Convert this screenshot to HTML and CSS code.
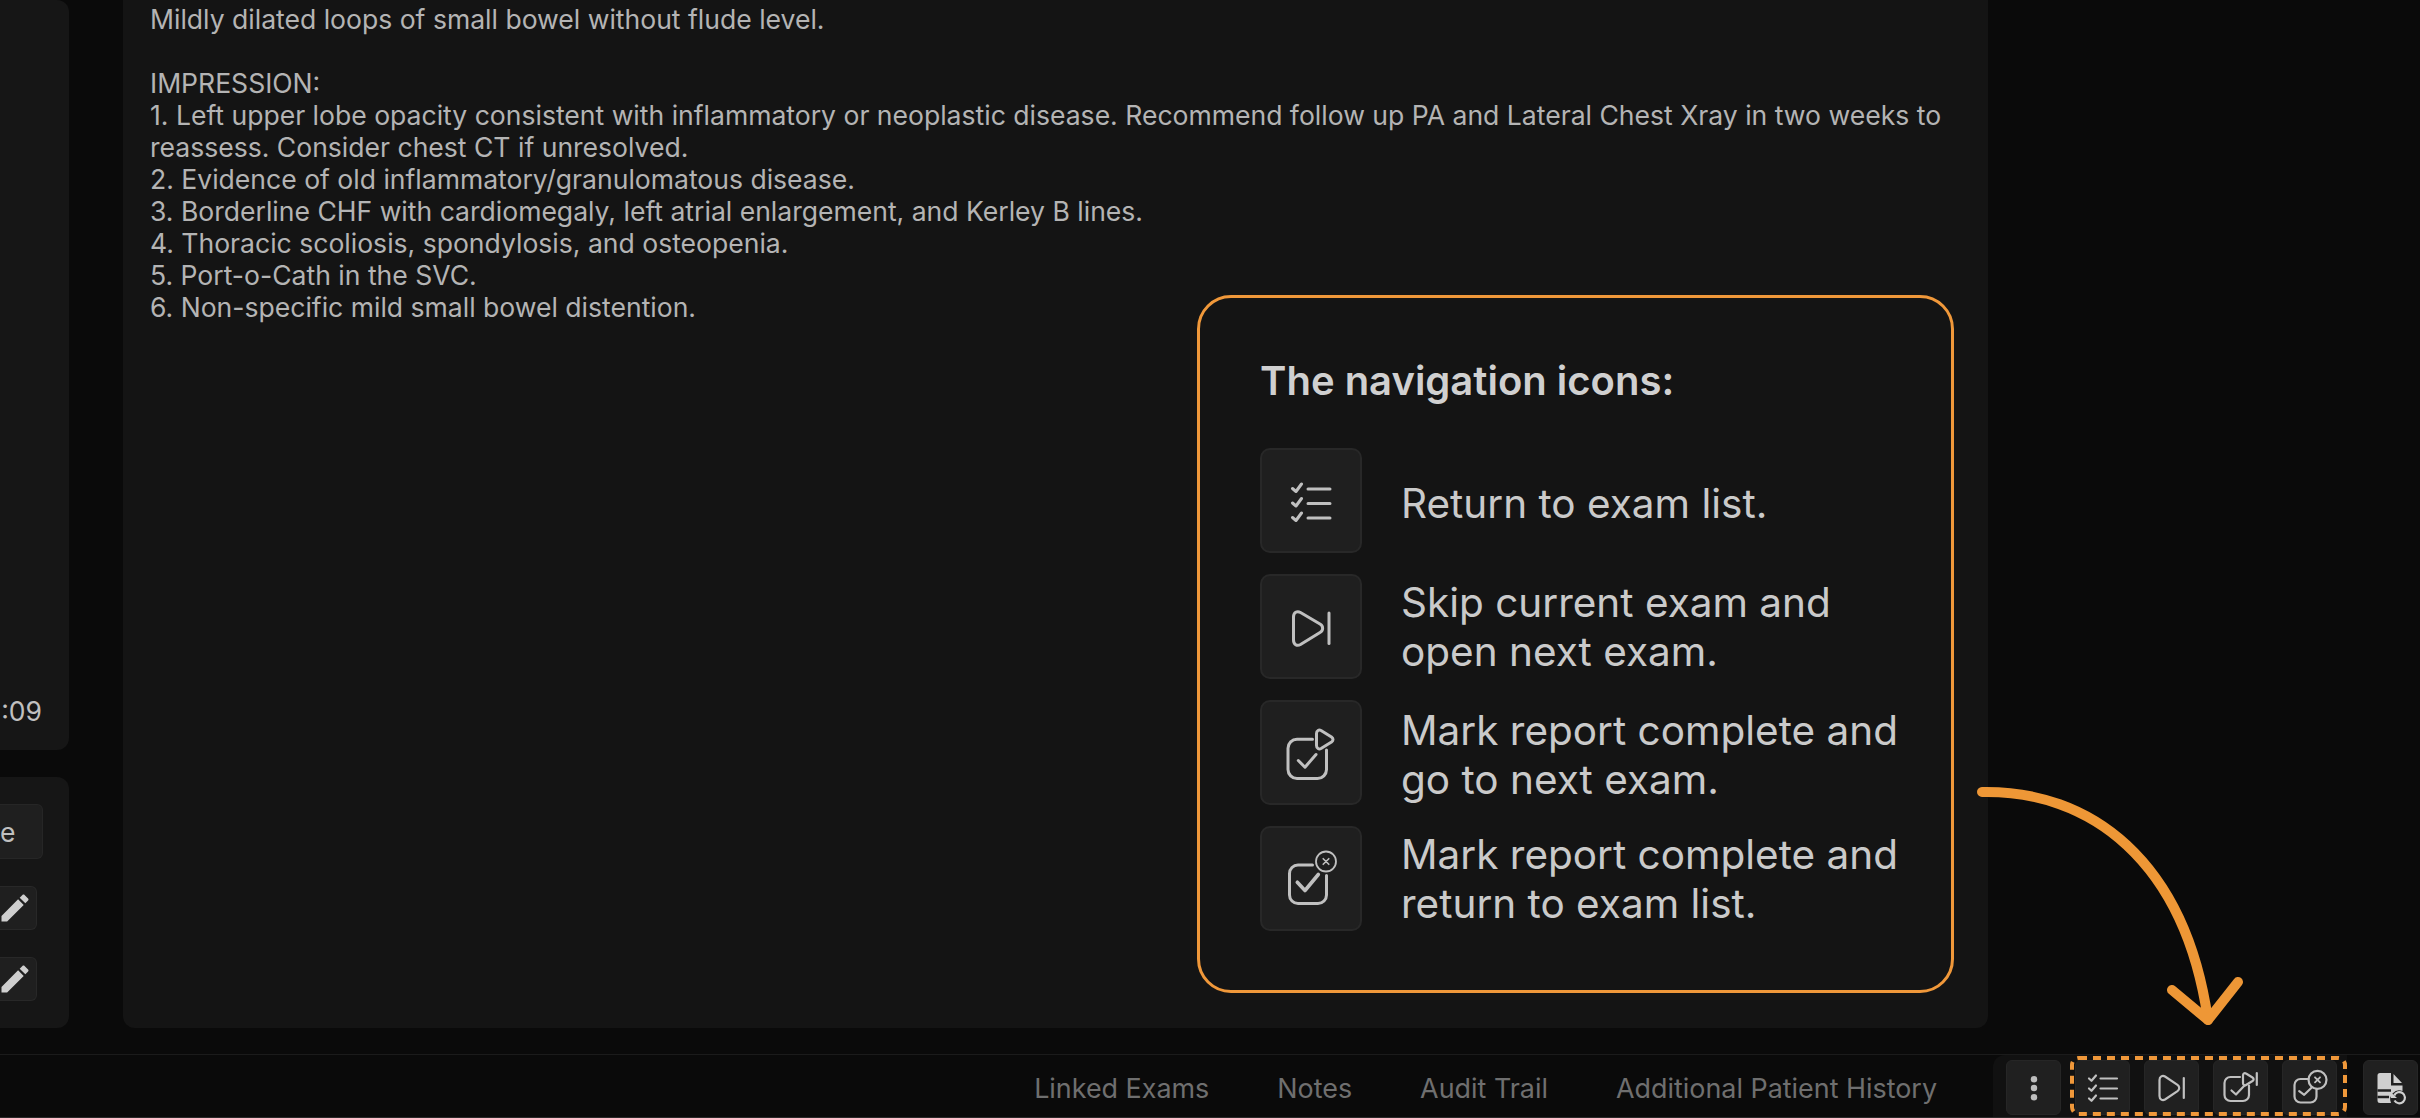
FILE: index.html
```html
<!DOCTYPE html>
<html lang="en">
<head>
<meta charset="utf-8">
<title>Report navigation</title>
<link rel="stylesheet" href="styles.css">
</head>
<body>
<div class="page">
  <main class="main">
    <aside class="sidebar">
      <section class="side-panel side-time"><span>:09</span></section>
      <section class="side-panel side-actions">
        <button class="side-btn">e</button>
        <button class="pencil-btn"><svg class="pencil" viewBox="0 0 24 24"><path d="M3 17.25V21h3.75L17.81 9.94l-3.75-3.75L3 17.25zM20.71 7.04c.39-.39.39-1.02 0-1.41l-2.34-2.34c-.39-.39-1.02-.39-1.41 0l-1.83 1.83 3.75 3.75 1.83-1.83z"/></svg></button>
        <button class="pencil-btn"><svg class="pencil" viewBox="0 0 24 24"><path d="M3 17.25V21h3.75L17.81 9.94l-3.75-3.75L3 17.25zM20.71 7.04c.39-.39.39-1.02 0-1.41l-2.34-2.34c-.39-.39-1.02-.39-1.41 0l-1.83 1.83 3.75 3.75 1.83-1.83z"/></svg></button>
      </section>
    </aside>
    <article class="report">
      <p>Mildly dilated loops of small bowel without flude level.</p>
      <p class="spaced">IMPRESSION:</p>
      <p>1. Left upper lobe opacity consistent with inflammatory or neoplastic disease. Recommend follow up PA and Lateral Chest Xray in two weeks to reassess. Consider chest CT if unresolved.</p>
      <p>2. Evidence of old inflammatory/granulomatous disease.</p>
      <p>3. Borderline CHF with cardiomegaly, left atrial enlargement, and Kerley B lines.</p>
      <p>4. Thoracic scoliosis, spondylosis, and osteopenia.</p>
      <p>5. Port-o-Cath in the SVC.</p>
      <p>6. Non-specific mild small bowel distention.</p>
    </article>
  </main>

  <footer class="footer">
    <nav class="tabs">
      <span>Linked Exams</span>
      <span>Notes</span>
      <span>Audit Trail</span>
      <span>Additional Patient History</span>
    </nav>
    <div class="actions">
      <button class="foot-btn"><svg class="foot-icon" viewBox="0 0 44 44"><circle class="dot" cx="22" cy="13.2" r="3.2"/><circle class="dot" cx="22" cy="22" r="3.2"/><circle class="dot" cx="22" cy="31.2" r="3.2"/></svg></button>
      <div class="nav-group">
        <button class="foot-btn"><svg class="foot-icon ln" viewBox="0 0 44 44"><path d="M8 12.5l2.5 2.3 4.5-5.3M8 22.5l2.5 2.3 4.5-5.3M8 32.5l2.5 2.3 4.5-5.3"/><path d="M19.5 12.5H36M19.5 22.5H36M19.5 32.5H36"/></svg></button>
        <button class="foot-btn"><svg class="foot-icon ln" viewBox="0 0 44 44"><path d="M9.5 14C9.5 10.5 12.5 9 15 10.5L27.5 18.8C29.8 20.5 29.8 23.5 27.5 25.2L15 33.5C12.5 35 9.5 33.5 9.5 30Z"/><path d="M33.8 12V32"/></svg></button>
        <button class="foot-btn"><svg class="foot-icon ln" viewBox="0 0 44 44"><path d="M21 11H11.5A6 6 0 0 0 5.5 17V29A6 6 0 0 0 11.5 35H24A6 6 0 0 0 30 29V19.5"/><path d="M12.5 24.5L17 28.5L25.5 19.5"/><path d="M24 9.5C24 7.5 25.5 6.5 27 7.5L33.5 11.5C35 12.5 35 14 33.5 15L27 19C25.5 20 24 19 24 17Z"/><path d="M37.8 7V19"/></svg></button>
        <button class="foot-btn"><svg class="foot-icon ln" viewBox="0 0 44 44"><path d="M20.5 13H12.5A6 6 0 0 0 6.5 19V30.5A6 6 0 0 0 12.5 36.5H22.5A6 6 0 0 0 28.5 30.5V23"/><path d="M11.2 25.2L16.2 28.8L23.5 21.8"/><circle cx="29.5" cy="13.8" r="9"/><path class="thin" d="M27 11.3L32 16.3M32 11.3L27 16.3"/></svg></button>
        <svg class="dash-frame" viewBox="0 0 277 60"><rect x="2" y="2" width="273" height="56" rx="7"/></svg>
      </div>
    </div>
    <button class="foot-btn doc-btn"><svg class="foot-icon" viewBox="0 0 44 44"><path class="doc" d="M11 7H22V19.5H33.5V25A9 9 0 0 0 22 37H11A2.5 2.5 0 0 1 8.5 34.5V9.5A2.5 2.5 0 0 1 11 7Z"/><path class="doc" d="M24.5 8L33 17H24.5Z"/><path class="slot" d="M8.5 24.5H22M8.5 31H20"/><path class="arrow" d="M25.2 29.5A5.6 5.6 0 1 1 25.5 34.5"/><path class="doc" d="M22 26.5V32H28Z"/></svg></button>
  </footer>

  <aside class="callout">
    <h2 class="callout-title">The navigation icons:</h2>
    <ul class="legend">
      <li class="legend-row row-one">
        <span class="tile"><svg class="tile-icon ln" viewBox="-6 -6 60 60"><path d="M5.5 11.5L9 14.5L14.5 7M5.5 26L9 29L14.5 21.5M5.5 40.5L9 43.5L14.5 36"/><path d="M21 12H43M21 26.5H43M21 41H43"/></svg></span>
        <span class="legend-text">Return to exam list.</span>
      </li>
      <li class="legend-row">
        <span class="tile"><svg class="tile-icon ln" viewBox="-6 -6 60 60"><path d="M6.5 14C6.5 9.5 10 7.5 13.5 9.5L33 21C36.5 23 36.5 27.5 33 29.5L13.5 41.5C10 43.5 6.5 41.5 6.5 37Z"/><path d="M42 10V40.5"/></svg></span>
        <span class="legend-text">Skip current exam and<br>open next exam.</span>
      </li>
      <li class="legend-row row-three">
        <span class="tile"><svg class="tile-icon ln" viewBox="-6 -6 60 60"><path d="M25.5 10.2H10A9 9 0 0 0 1 19.2V40.5A9 9 0 0 0 10 49.5H30.5A9 9 0 0 0 39.5 40.5V21"/><path d="M11.3 31.5L18 38.2L29 25.5"/><path d="M29.5 4.5C29.5 1.5 32 0.5 34 1.5L44.5 8C46.5 9.5 46.5 11.5 44.5 13L34 19.5C32 20.5 29.5 19.5 29.5 16.5Z"/></svg></span>
        <span class="legend-text">Mark report complete and<br>go to next exam.</span>
      </li>
      <li class="legend-row">
        <span class="tile"><svg class="tile-icon ln" viewBox="-6 -6 60 60"><path d="M25.5 10H11A8.5 8.5 0 0 0 2.5 18.5V40A8.5 8.5 0 0 0 11 48.5H31A8.5 8.5 0 0 0 39.5 40V20.5"/><path class="bold" d="M10.3 27.2L18 35.5L31.3 19.5"/><circle cx="39" cy="6.5" r="10"/><path class="thin" d="M36.2 3.7L41.8 9.3M41.8 3.7L36.2 9.3"/></svg></span>
        <span class="legend-text">Mark report complete and<br>return to exam list.</span>
      </li>
    </ul>
  </aside>

  <svg class="pointer" viewBox="0 0 2420 1118"><path d="M1982 792C2090 790 2185 860 2208 1020"/><path d="M2172 990L2208 1020L2238 982"/></svg>
</div>
</body>
</html>
```

FILE: styles.css
```css
* { box-sizing: border-box; }
html, body { margin: 0; height: 100%; background: #0a0a0a; }
body { font-family: "Inter", "Liberation Sans", sans-serif; color: #b4b4b4; overflow: hidden; }
button { font: inherit; color: inherit; padding: 0; cursor: pointer; }
svg { display: block; }

.page { position: relative; width: 2420px; height: 1118px; display: flex; flex-direction: column; overflow: hidden; }

.main { flex: 1; min-height: 0; display: flex; gap: 54px; padding: 0 432px 26px 0; overflow: hidden; }

.sidebar { width: 69px; flex: none; display: flex; flex-direction: column; gap: 27px; }
.side-panel { background: #161616; border-radius: 0 12px 12px 0; }
.side-time { flex: 1; display: flex; justify-content: flex-end; align-items: flex-end; padding: 0 27px 23px 0; font-size: 26.5px; line-height: 32px; color: #c0c0c0; }
.side-actions { display: flex; flex-direction: column; align-items: flex-end; gap: 27px; padding: 27px 0; }
.side-btn { width: 43px; height: 55px; margin-right: 26px; background: #1f1f1f; border: 1px solid #262626; border-left: 0; border-radius: 0 6px 6px 0; text-align: left; font-size: 26.5px; color: #c0c0c0; }
.pencil-btn { width: 37px; height: 44px; margin-right: 32px; background: #1f1f1f; border: 1px solid #282828; border-left: 0; border-radius: 0 6px 6px 0; display: flex; align-items: center; justify-content: flex-end; overflow: visible; }
.pencil { width: 36px; height: 36px; margin-right: 3px; fill: #cfcfcf; flex: none; }

.report { flex: 1; background: #141414; border-radius: 0 0 12px 12px; padding: 3px 27px 0; font-size: 26.56px; line-height: 32px; color: #b4b4b4; }
.report p { margin: 0; }
.report .spaced { margin-top: 32px; }

.footer { height: 64px; flex: none; display: flex; align-items: stretch; border-top: 1px solid #1b1b1b; border-bottom: 1px solid #2a2a2a; background: #0a0a0a; }
.tabs { flex: 1; display: flex; justify-content: flex-end; align-items: center; gap: 68px; padding: 3px 56px 0 0; font-size: 26.9px; color: #6f6f6f; }
.actions { display: flex; align-items: flex-start; width: 354px; padding: 1px 0 0 13px; background: #111; border-radius: 12px 0 0 0; }
.foot-btn { width: 55px; height: 55px; flex: none; background: #202020; border: 1px solid #262626; border-radius: 6px; display: flex; align-items: center; justify-content: center; }
.actions > .foot-btn { margin-top: 4px; }
.nav-group { position: relative; display: flex; align-items: flex-start; gap: 14px; margin-left: 9px; padding: 4px 0 0 5px; height: 60px; width: 277px; }
.dash-frame { position: absolute; left: 0; top: 0; width: 277px; height: 60px; pointer-events: none; }
.dash-frame rect { fill: none; stroke: #f0983a; stroke-width: 4; stroke-dasharray: 8 6; }
.doc-btn { margin: 5px 2px 0 16px; align-self: flex-start; }
.foot-icon { width: 44px; height: 44px; overflow: visible; flex: none; }
.dot { fill: #bdbdbd; }
.doc { fill: #cfcfcf; }
.slot { fill: none; stroke: #202020; stroke-width: 2.4; }
.arrow { fill: none; stroke: #cfcfcf; stroke-width: 2.2; }

.ln path, .ln circle { fill: none; stroke: #c0c0c0; stroke-linecap: round; stroke-linejoin: round; }
.foot-icon.ln path, .foot-icon.ln circle { stroke-width: 2.2; }
.foot-icon.ln path.thin { stroke-width: 1.8; }
.tile-icon.ln path { stroke-width: 3; }
.tile-icon.ln circle { stroke-width: 1.8; }
.tile-icon.ln path.bold { stroke-width: 3.6; }
.tile-icon.ln path.thin { stroke-width: 1.6; }

.callout { position: absolute; left: 1197px; top: 295px; width: 757px; height: 698px; padding: 0 60px; background: #141414; border: 3px solid #f0983a; border-radius: 34px; }
.callout-title { margin: 0; padding-top: 58px; font-size: 40px; line-height: 50px; font-weight: 600; color: #d0d0d0; }
.legend { list-style: none; margin: 42px 0 0; padding: 0; display: flex; flex-direction: column; gap: 21px; }
.legend-row { display: flex; align-items: center; gap: 39px; height: 105px; }
.tile { width: 102px; height: 105px; flex: none; background: #1f1f1f; border: 2px solid #282828; border-radius: 10px; display: flex; align-items: center; justify-content: center; }
.tile-icon { width: 60px; height: 60px; flex: none; overflow: visible; }
.legend-text { font-size: 40.5px; line-height: 49px; color: #cacaca; white-space: nowrap; }
.row-one .legend-text { padding-top: 6px; }
.row-three .legend-text { padding-top: 4px; }

.pointer { position: absolute; left: 0; top: 0; width: 2420px; height: 1118px; pointer-events: none; }
.pointer path { fill: none; stroke: #ee9736; stroke-width: 10; stroke-linecap: round; stroke-linejoin: round; }
```
